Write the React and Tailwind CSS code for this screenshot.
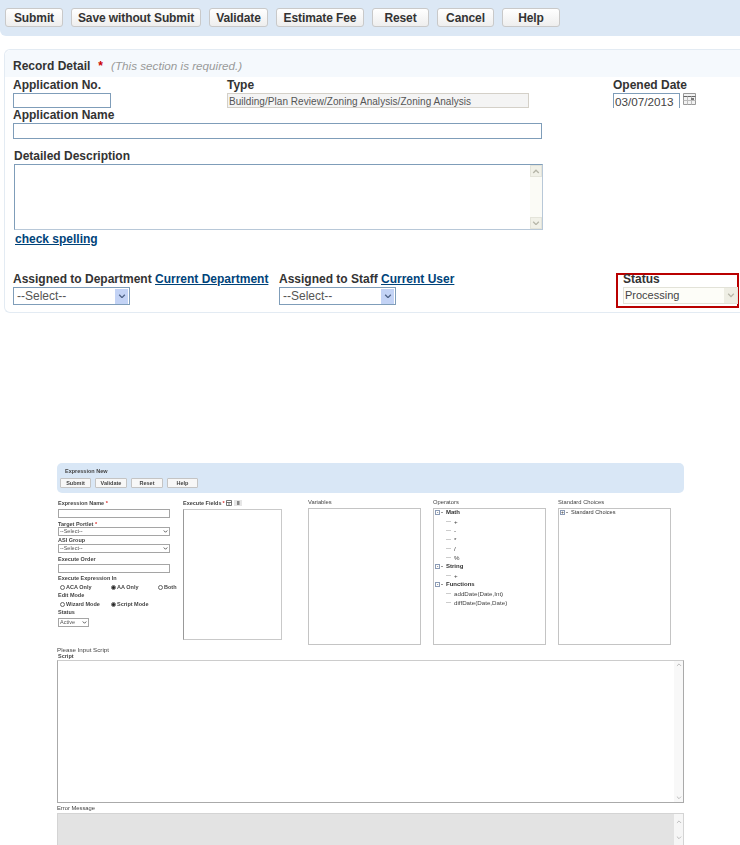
const topButtons = [
  ['Submit', 'w-[58px]'],
  ['Save without Submit', 'w-[130px]'],
  ['Validate', 'w-[59px]'],
  ['Estimate Fee', 'w-[88px]'],
  ['Reset', 'w-[57px]'],
  ['Cancel', 'w-[57px]'],
  ['Help', 'w-[58px]'],
]

const smallButtons = [
  ['Submit', 'w-[31px]'],
  ['Validate', 'w-[32px]'],
  ['Reset', 'w-[32px]'],
  ['Help', 'w-[31px]'],
]

function Label({ children, className = '' }) {
  return <div className={`h-[14px] text-[12px] leading-[12px] font-bold text-[#333] ${className}`}>{children}</div>
}

function BlueLink({ children }) {
  return <a className="font-bold text-[#00437a] underline">{children}</a>
}

function Chevron({ className = '' }) {
  return (
    <svg viewBox="0 0 10 6" className={className} fill="none" stroke="currentColor" strokeWidth="1.6">
      <path d="M1.5 1l3.5 3.5L8.500 1" />
    </svg>
  )
}

function BlueSelect({ className = '' }) {
  return (
    <div className={`flex h-[18px] w-[117px] items-center justify-between border border-[#7f9db9] bg-white pl-[3px] pr-[1px] text-[12px] text-[#555] ${className}`}>
      <span>--Select--</span>
      <span className="flex h-[15px] w-[13px] items-center justify-center bg-[#c3d3f5] text-[#4d6185]">
        <Chevron className="w-[8px]" />
      </span>
    </div>
  )
}

function TinySelect({ value, className = 'w-[112px]' }) {
  return (
    <div className={`flex h-[9px] items-center justify-between border border-[#a5a5a5] bg-white px-[1px] text-[5.500px] leading-[7px] text-[#555] ${className}`}>
      <span>{value}</span>
      <Chevron className="w-[5px] text-[#333]" />
    </div>
  )
}

function TinyLabel({ children, className = '' }) {
  return <div className={`text-[5.500px] leading-[7px] font-bold text-[#444] ${className}`}>{children}</div>
}

function Radio({ label, checked, className = '' }) {
  return (
    <div className={`flex items-center gap-[1px] text-[5.500px] leading-[7px] font-bold text-[#444] ${className}`}>
      <span className="flex h-[5px] w-[5px] items-center justify-center rounded-full border-[0.5px] border-[#666] bg-white">
        {checked && <span className="h-[3px] w-[3px] rounded-full bg-[#222]" />}
      </span>
      {label}
    </div>
  )
}

function TreeGroup({ title, items, open = true }) {
  return (
    <div>
      <div className="flex h-[9px] items-center gap-[1px] text-[6px] font-bold text-[#333]">
        <span className="flex h-[5px] w-[5px] items-center justify-center border-[0.5px] border-[#8b9bb5] text-[5px] leading-none font-normal">{open ? '-' : '+'}</span>
        <span className="mr-[2px] h-px w-[2px] bg-[#999]" />
        {title}
      </div>
      {items.map((item) => (
        <div key={item} className="flex h-[9px] items-center pl-[11px] text-[6.200px] text-[#444]">
          <span className="mr-[3px] h-px w-[5px] bg-[#ccc]" />
          {item}
        </div>
      ))}
    </div>
  )
}

export default function App() {
  return (
    <div className="h-[845px] w-[740px] overflow-hidden bg-white font-['Liberation_Sans',Arial,sans-serif]">
      {/* action bar */}
      <div className="flex h-[36px] items-start gap-[8px] rounded-bl-[6px] bg-[#dce8f5] pl-[5px] pt-[8px]">
        {topButtons.map(([label, width]) => (
          <button key={label} className={`h-[19px] ${width} rounded-[3px] border border-[#c9c9c9] bg-gradient-to-b from-white to-[#eeeeee] text-center text-[12px] leading-[16px] font-bold tracking-[-0.1px] text-[#333]`}>
            {label}
          </button>
        ))}
      </div>

      {/* record detail */}
      <div className="ml-[4px] mt-[13px] h-[264px] rounded-l-[6px] border border-r-0 border-[#e3ebf3]">
        <div className="flex h-[27px] items-center rounded-tl-[6px] bg-[#f5f9fd] pl-[8px] pt-[4px] text-[12px]">
          <span className="font-bold text-[#333]">Record Detail</span>
          <span className="ml-[8px] font-bold text-[#c00]">*</span>
          <span className="ml-[8px] text-[11.700px] italic text-[#999]">(This section is required.)</span>
        </div>

        <div className="mt-[2px] flex pl-[8px]">
          <div className="w-[214px]">
            <Label>Application No.</Label>
            <input className="block h-[15px] w-[98px] border border-[#7f9db9] bg-white" />
          </div>
          <div className="w-[386px]">
            <Label>Type</Label>
            <div className="h-[15px] w-[302px] truncate border border-[#d4d0c8] bg-[#f4f4f4] pl-[1px] text-[10px] leading-[15px] tracking-[0.05px] text-[#555]">Building/Plan Review/Zoning Analysis/Zoning Analysis</div>
          </div>
          <div>
            <Label>Opened Date</Label>
            <div className="flex items-start gap-[3px]">
              <div className="h-[15px] w-[67px] border border-b-0 border-[#7f9db9] pl-[1px] text-[11.700px] leading-[15px] text-[#444]">03/07/2013</div>
              <svg viewBox="0 0 13 12" className="h-[12px] w-[13px]" fill="#f2f2f2" stroke="#999" strokeWidth="1">
                <path d="M.5.500h12v11H.500z" />
                <path d="M.5 3.500h12" stroke="#666" />
                <path d="M4.500 3.500v8M8.500 3.500v8M.5 7.500h12" stroke="#bbb" />
                <path d="M8 5h3v2H8z" fill="#777" stroke="none" />
              </svg>
            </div>
          </div>
        </div>

        <Label className="ml-[8px] mt-[1px]">Application Name</Label>
        <input className="ml-[8px] block h-[16px] w-[529px] border border-[#7f9db9] bg-white" />

        <Label className="ml-[9px] mt-[11px]">Detailed Description</Label>
        <div className="ml-[9px] flex h-[66px] w-[529px] justify-end border border-[#7f9db9] border-b-[#b8c8d8] border-r-[#b8c8d8] bg-white">
          <div className="flex w-[12px] flex-col justify-between bg-[#fbfbf6] text-[#b5b5a8]">
            <span className="flex h-[12px] items-center justify-center border border-[#e4e4da] bg-[#f1f1e8]"><Chevron className="w-[8px] rotate-180" /></span>
            <span className="flex h-[12px] items-center justify-center border border-[#e4e4da] bg-[#f1f1e8]"><Chevron className="w-[8px]" /></span>
          </div>
        </div>

        <div className="ml-[10px] mt-[2px] text-[12px] leading-[14px]"><BlueLink>check spelling</BlueLink></div>

        <div className="mt-[27px] flex items-start pl-[8px]">
          <div className="w-[266px]">
            <Label className="whitespace-nowrap">Assigned to Department <BlueLink>Current Department</BlueLink></Label>
            <BlueSelect />
          </div>
          <div className="w-[337px]">
            <Label className="whitespace-nowrap">Assigned to Staff <BlueLink>Current User</BlueLink></Label>
            <BlueSelect />
          </div>
          <div className="h-[35px] w-[123px] border-2 border-[#b90000] pl-[5px]">
            <Label className="-mt-[2px]">Status</Label>
            <div className="flex h-[17px] w-[115px] items-center justify-between border border-[#e2e2d8] bg-[#fdfdf8] pl-[1px] text-[11px] text-[#444]">
              <span>Processing</span>
              <span className="flex h-[15px] w-[13px] items-center justify-center bg-[#eeeee4] text-[#b5b5a8]"><Chevron className="w-[8px]" /></span>
            </div>
          </div>
        </div>
      </div>

      {/* embedded expression form */}
      <div className="ml-[57px] mt-[150px] w-[627px] blur-[0.35px]">
        <div className="h-[30px] rounded-[5px] bg-[#d9e7f6] pl-[3px] pt-[5px]">
          <div className="pl-[5px] text-[5.500px] leading-[7px] font-bold text-[#444]">Expression New</div>
          <div className="mt-[3px] flex gap-[4px]">
            {smallButtons.map(([label, width]) => (
              <button key={label} className={`h-[10px] ${width} rounded-[1px] border border-[#c4c4c4] bg-[#f7f7f7] text-center text-[5.500px] leading-[7px] font-bold text-[#444]`}>{label}</button>
            ))}
          </div>
        </div>

        <div className="mt-[7px] flex items-start">
          <div className="w-[126px] pl-[1px]">
            <TinyLabel className="h-[9px]">Expression Name <span className="text-[#d33]">*</span></TinyLabel>
            <div className="h-[9px] w-[112px] border border-[#a5a5a5]" />
            <TinyLabel className="mt-[3px] h-[6px]">Target Portlet <span className="text-[#d33]">*</span></TinyLabel>
            <TinySelect value="--Select--" />
            <TinyLabel className="mt-[1px] h-[7px]">ASI Group</TinyLabel>
            <TinySelect value="--Select--" />
            <TinyLabel className="mt-[3px] h-[8px]">Execute Order</TinyLabel>
            <div className="h-[9px] w-[112px] border border-[#a5a5a5]" />
            <TinyLabel className="mt-[2px] h-[8px]">Execute Expression In</TinyLabel>
            <div className="flex h-[9px] items-center pl-[2px]">
              <Radio label="ACA Only" className="w-[51px]" />
              <Radio label="AA Only" checked className="w-[47px]" />
              <Radio label="Both" />
            </div>
            <TinyLabel className="h-[8px]">Edit Mode</TinyLabel>
            <div className="flex h-[9px] items-center pl-[2px]">
              <Radio label="Wizard Mode" className="w-[51px]" />
              <Radio label="Script Mode" checked />
            </div>
            <TinyLabel className="h-[9px]">Status</TinyLabel>
            <TinySelect value="Active" className="w-[31px]" />
          </div>

          <div className="w-[125px]">
            <div className="flex h-[9px] items-start gap-[1px] text-[5.500px] leading-[7px] font-bold text-[#444]">
              Execute Fields <span className="text-[#d33]">*</span>
              <svg viewBox="0 0 6 6" className="h-[6px] w-[6px]" fill="none" stroke="#555" strokeWidth="0.8"><path d="M.5.500h5v5h-5zM.5 2.500h5M3 2.500v3" /></svg>
              <svg viewBox="0 0 8 6" className="ml-[1px] h-[6px] w-[8px]"><rect width="8" height="6" fill="#e6e6e6" /><rect x="3" y="1" width="2.500" height="4" fill="#888" /></svg>
            </div>
            <div className="h-[131px] w-[99px] border border-[#c9c9c9] border-l-[#999]" />
          </div>

          <div className="-mt-[1px] w-[125px]">
            <div className="h-[9px] text-[5.800px] leading-[7px] text-[#444]">Variables</div>
            <div className="h-[137px] w-[113px] border border-[#c4c4c4]" />
          </div>

          <div className="-mt-[1px] w-[125px]">
            <div className="h-[9px] text-[5.800px] leading-[7px] text-[#444]">Operators</div>
            <div className="h-[137px] w-[113px] border border-[#c4c4c4] pl-[1px]">
              <div className="-mt-[1px]">
                <TreeGroup title="Math" items={['+', '-', '*', '/', '%']} />
                <TreeGroup title="String" items={['+']} />
                <TreeGroup title="Functions" items={['addDate(Date,Int)', 'diffDate(Date,Date)']} />
              </div>
            </div>
          </div>

          <div className="-mt-[1px]">
            <div className="h-[9px] text-[5.800px] leading-[7px] text-[#444]">Standard Choices</div>
            <div className="h-[137px] w-[113px] border border-[#c4c4c4] pl-[1px]">
              <div className="-mt-[1px]">
                <TreeGroup title={<span className="text-[5.600px] font-normal">Standard Choices</span>} items={[]} open={false} />
              </div>
            </div>
          </div>
        </div>

        <div className="mt-[1px] text-[6.200px] leading-[7px] text-[#444]">Please Input Script</div>
        <div className="h-[7px] pl-[1px] text-[5.500px] leading-[7px] font-bold text-[#444]">Script</div>
        <div className="flex h-[143px] justify-end border border-[#aaa] border-t-[#ccc]">
          <div className="flex w-[9px] flex-col justify-between bg-[#f8f8f8] py-[2px] text-[#bbb]">
            <Chevron className="w-[6px] self-center rotate-180" />
            <Chevron className="w-[6px] self-center" />
          </div>
        </div>
        <div className="mt-[1px] h-[9px] text-[5.800px] leading-[9px] text-[#444]">Error Message</div>
        <div className="flex h-[34px] justify-end border border-[#d4d4d4] bg-[#e3e3e3]">
          <div className="flex w-[9px] flex-col justify-around bg-[#f6f6f6] text-[#bbb]">
            <Chevron className="w-[6px] self-center rotate-180" />
            <Chevron className="w-[6px] self-center" />
          </div>
        </div>
      </div>
    </div>
  )
}
